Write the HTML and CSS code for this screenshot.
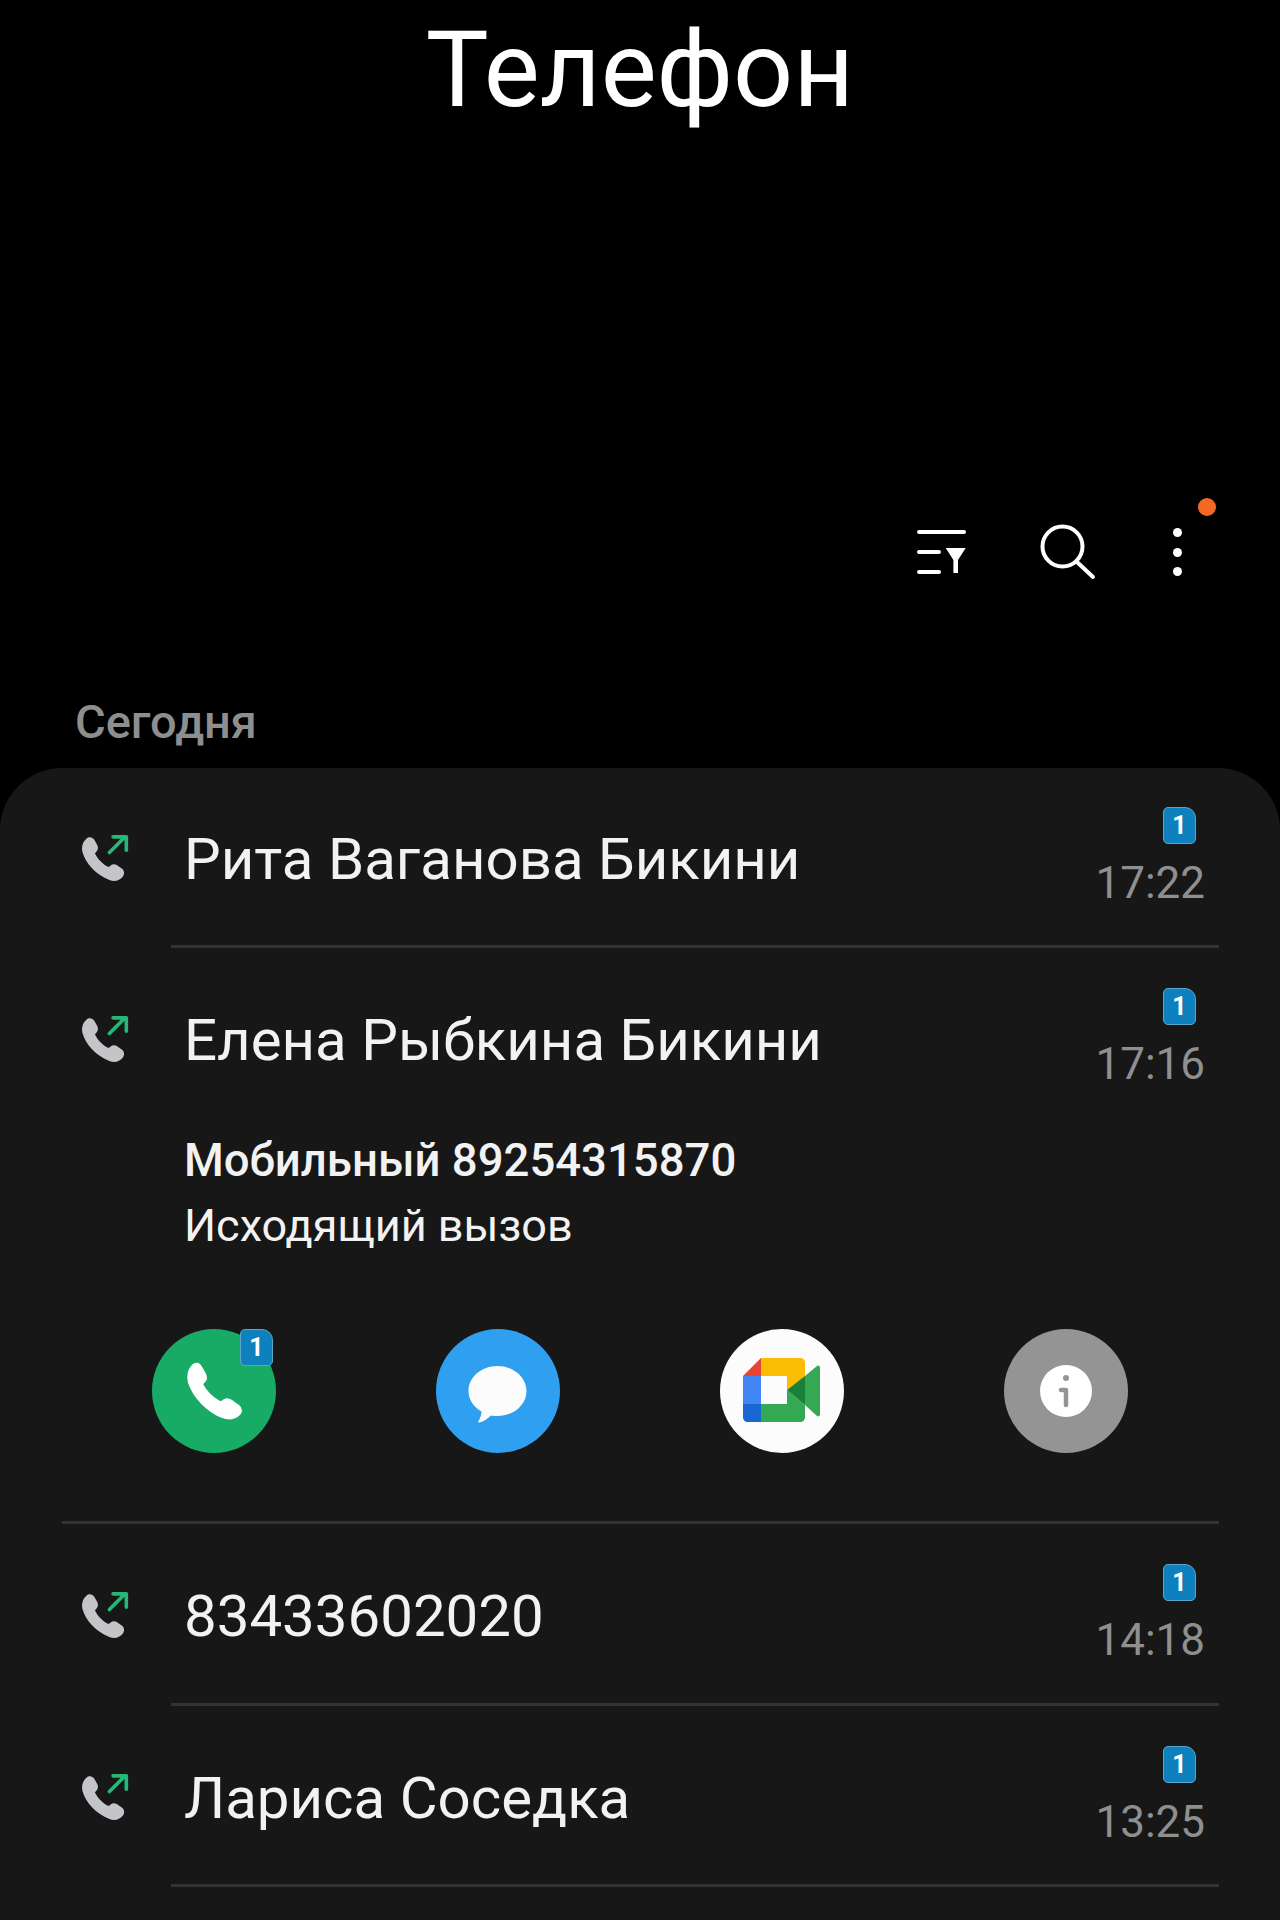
FILE: index.html
```html
<!DOCTYPE html>
<html lang="ru">
<head>
    <meta charset="UTF-8">
    <title>Телефон</title>
    <link rel="stylesheet" href="styles.css">
</head>
<body>
    <svg class="defs">
        <symbol id="outgoing" viewBox="0 0 48 48">
            <path d="M7 5.500C9 3.500 12 4 13.500 6.500L16 11C17 13 16.500 15 15 16.500L14 17.500C16 22 20 26.500 25.500 29L27 27.700C28.500 26.300 30.500 26.300 32 27.300L36.500 30.500C38.500 32 38.700 35 37 37C34.500 40 30.500 41.500 26 39.700C15 35.300 6.500 26.500 3.700 16.500C2.700 12 4 8 7 5.500Z" fill="#c4c5c8"/>
            <path d="M26 17L39 4M29 4H40V15" fill="none" stroke="#27b877" stroke-width="3" stroke-linecap="round" stroke-linejoin="round"/>
        </symbol>
    </svg>

    <div class="screen">
        <h1 class="title">Телефон</h1>

        <div class="toolbar">
            <svg class="tool" width="60" height="60" viewBox="0 0 60 60" fill="none" stroke="#fff" stroke-width="4" stroke-linecap="round">
                <path d="M8 10H53M8 30H28M8 50H28"/>
                <path d="M34.700 26H54.700L47 38V51H42.400V38Z" fill="#fff" stroke="none"/>
            </svg>
            <svg class="tool" width="60" height="60" viewBox="0 0 60 60" fill="none" stroke="#fff" stroke-width="4" stroke-linecap="round">
                <circle cx="23.500" cy="24.500" r="20"/>
                <path d="M38 40L54 55"/>
            </svg>
            <div class="more">
                <span class="dot"></span>
                <span class="dot"></span>
                <span class="dot"></span>
                <span class="badge-new"></span>
            </div>
        </div>

        <div class="day">Сегодня</div>

        <div class="card">
            <div class="call">
                <svg class="call-icon" width="58" height="58"><use href="#outgoing"/></svg>
                <div class="name">Рита Ваганова Бикини</div>
                <div class="meta">
                    <span class="sim">1</span>
                    <span class="time">17:22</span>
                </div>
            </div>

            <div class="call call-open">
                <svg class="call-icon" width="58" height="58"><use href="#outgoing"/></svg>
                <div class="name">Елена Рыбкина Бикини</div>
                <div class="meta">
                    <span class="sim">1</span>
                    <span class="time">17:16</span>
                </div>
            </div>

            <div class="details">
                <div class="number">Мобильный 89254315870</div>
                <div class="direction">Исходящий вызов</div>
            </div>

            <div class="actions">
                <div class="action action-call">
                    <svg width="68" height="68" viewBox="0 0 64 64">
                        <path d="M12 8C14.500 5.500 18 6 19.500 9L23.500 16C25 19 24.500 22 22 24L20.500 25.500C24 32 31 39.500 38.500 43L41 41C43 39.300 46 39.300 48 41L55 46C58 48.300 58 52 55.500 54C51.500 57.500 46 59 40 56.500C26 51 13 38 8.500 24C7 18 8.500 12 12 8Z" fill="#fff" stroke="#fff" stroke-width="2" stroke-linejoin="round"/>
                    </svg>
                    <span class="sim sim-small">1</span>
                </div>
                <div class="action action-msg">
                    <svg width="64" height="64" viewBox="0 0 64 64">
                        <path d="M31.500 7C47.500 7 60.500 18 60.500 32C60.500 46 47.500 57 31.500 57C29 57 27 56.900 25 56.500C21 60 17 63 13 63.500C12 63.500 12 62.500 12.500 62C14.500 59 15.500 55 15.500 52.500C7.500 48 2.500 40.500 2.500 32C2.500 18 15.500 7 31.500 7Z" fill="#fcfcfc"/>
                    </svg>
                </div>
                <div class="action action-meet">
                    <svg width="80" height="66" viewBox="-1 0 80 66">
                        <path d="M18 0V18H0Z" fill="#ea4335"/>
                        <path d="M18 0H57C60 0 62 2 62 5V19L44 32V18H18Z" fill="#fbbc04"/>
                        <path d="M0 18H18V46H0Z" fill="#4285f4"/>
                        <path d="M0 46H18V64H5C2 64 0 62 0 59Z" fill="#1967d2"/>
                        <path d="M18 46H44V32L62 47V59C62 62 60 64 57 64H18Z" fill="#34a853"/>
                        <path d="M44 32L62 18V47Z" fill="#188038"/>
                        <path d="M62 18L74 8C75.500 7 77 8 77 10V56C77 58 75.500 59 74 58L62 47Z" fill="#34a853"/>
                    </svg>
                </div>
                <div class="action action-info">
                    <svg width="52" height="52" viewBox="0 0 52 52">
                        <circle cx="26" cy="26" r="26" fill="#fff"/>
                        <circle cx="26" cy="13" r="3" fill="#949494"/>
                        <path d="M21 25H26V40" fill="none" stroke="#949494" stroke-width="4.500" stroke-linecap="round" stroke-linejoin="round"/>
                    </svg>
                </div>
            </div>

            <div class="rule"></div>

            <div class="call call-after">
                <svg class="call-icon" width="58" height="58"><use href="#outgoing"/></svg>
                <div class="name">83433602020</div>
                <div class="meta">
                    <span class="sim">1</span>
                    <span class="time">14:18</span>
                </div>
            </div>

            <div class="call call-open-end">
                <svg class="call-icon" width="58" height="58"><use href="#outgoing"/></svg>
                <div class="name">Лариса Соседка</div>
                <div class="meta">
                    <span class="sim">1</span>
                    <span class="time">13:25</span>
                </div>
            </div>
        </div>
    </div>
</body>
</html>
```

FILE: styles.css
```css
body {
    margin: 0;
    background-color: #000;
    font-family: Roboto, "Noto Sans", sans-serif;
    color: #fff;
}
.defs {
    display: none;
}
.screen {
    height: 1920px;
    overflow: hidden;
}
.title {
    margin: 0;
    padding-top: 10px;
    font-size: 105.500px;
    line-height: 120px;
    font-weight: 400;
    text-align: center;
}

/* --- toolbar --- */
.toolbar {
    display: flex;
    justify-content: flex-end;
    align-items: center;
    gap: 68px;
    height: 66px;
    margin-top: 389px;
    padding-right: 98px;
}
.tool {
    display: block;
}
.more {
    position: relative;
    display: flex;
    flex-direction: column;
    gap: 10.500px;
    width: 9px;
    margin-left: 6px;
}
.dot {
    width: 9px;
    height: 9px;
    border-radius: 50%;
    background-color: #fff;
}
.badge-new {
    position: absolute;
    top: -30px;
    left: 25px;
    width: 18px;
    height: 18px;
    border-radius: 50%;
    background-color: #f26a21;
}

.day {
    margin-top: 111px;
    padding-left: 75px;
    font-size: 47px;
    line-height: 52px;
    font-weight: 500;
    color: #8e8e8e;
}

/* --- card --- */
.card {
    margin-top: 20px;
    height: 1200px;
    background-color: #171717;
    border-radius: 62px 62px 0 0;
}
.call {
    display: flex;
    align-items: center;
    position: relative;
    height: 180px;
    padding: 0 75px 0 78px;
    box-sizing: border-box;
}
.call::after {
    content: "";
    position: absolute;
    left: 171px;
    right: 61px;
    bottom: 0;
    height: 3px;
    background-color: #333;
}
.call-open {
    height: 181px;
}
.call-open::after {
    display: none;
}
.call-after {
    height: 182px;
}
.call-open-end {
    height: 181px;
}
.call-icon {
    flex: none;
    margin-top: 6px;
}
.name {
    flex: 1;
    margin: 2px 0 0 48px;
    font-size: 58.200px;
    color: #f2f2f2;
}
.meta {
    display: flex;
    flex-direction: column;
    align-items: flex-end;
    gap: 13px;
}
.sim {
    display: flex;
    justify-content: center;
    align-items: center;
    width: 33px;
    height: 37px;
    margin-right: 9px;
    box-sizing: border-box;
    background-color: #0e80bd;
    border: 1px solid #5aa6cc;
    border-radius: 5px;
    border-top-right-radius: 11px;
    font-size: 25px;
    font-weight: 700;
    color: #fff;
}
.time {
    font-size: 44px;
    line-height: 52px;
    color: #8f8f8f;
}

.details {
    margin-top: -1px;
    padding-left: 184px;
    color: #f2f2f2;
}
.number {
    font-size: 45.500px;
    line-height: 66px;
    font-weight: 500;
}
.direction {
    font-size: 45px;
    line-height: 64px;
}

/* --- action buttons --- */
.actions {
    display: grid;
    grid-template-columns: repeat(4, 124px);
    justify-content: space-between;
    margin-top: 71px;
    padding: 0 152px;
}
.action {
    position: relative;
    display: flex;
    justify-content: center;
    align-items: center;
    width: 124px;
    height: 124px;
    border-radius: 50%;
}
.action-call { background-color: #18ab66; }
.action-msg { background-color: #2f9ff0; }
.action-meet { background-color: #fcfcfc; }
.action-info { background-color: #949494; }
.sim-small {
    position: absolute;
    top: 0;
    right: 3px;
    margin: 0;
}

.rule {
    height: 3px;
    margin: 68px 61px 0 62px;
    background-color: #333;
}
```
